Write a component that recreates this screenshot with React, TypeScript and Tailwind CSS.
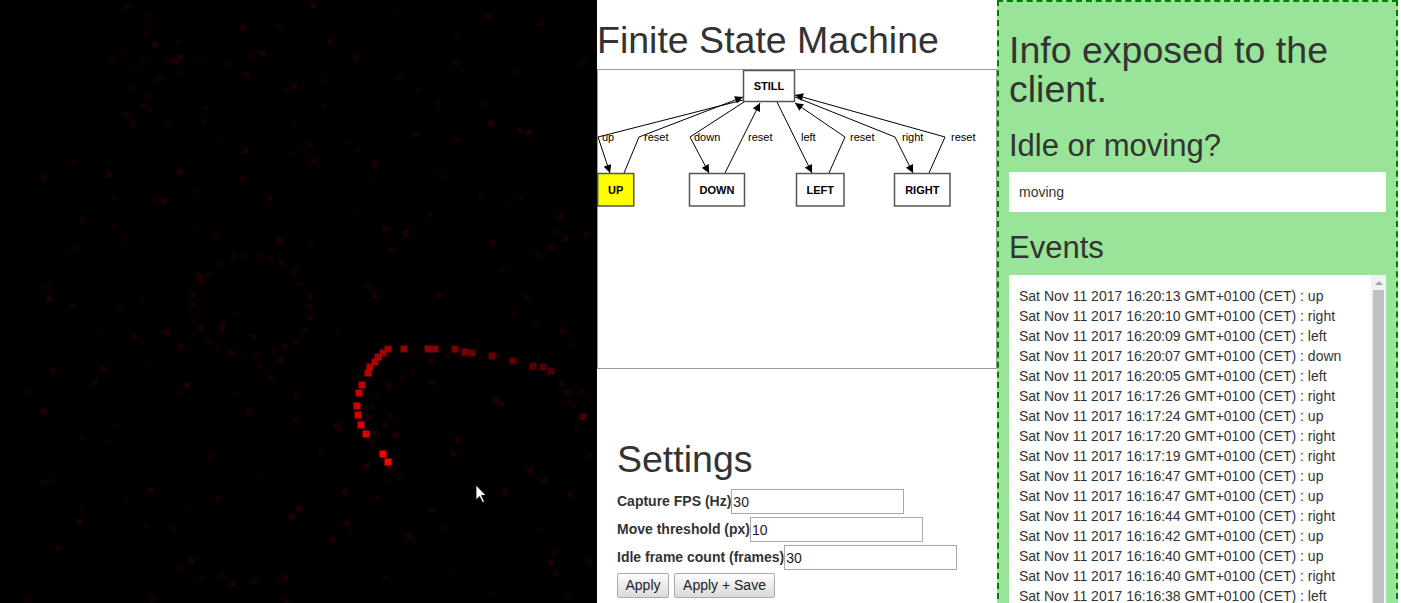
import React from "react";

const FONT = "Liberation Sans, Arial, Helvetica, sans-serif";

// bright trail, oldest first
const trail: [number, number][] = [
  [583, 417], [551, 371], [543, 367], [533, 366], [513, 361], [492, 356],
  [472, 353], [465, 352], [455, 349], [435, 349], [428, 349], [404, 349],
  [388, 349], [383, 353], [378, 357], [375, 362], [370, 367], [368, 373],
  [362, 385], [359, 393], [357, 406], [358, 415], [361, 425], [366, 434],
  [383, 454], [388, 462],
];

function faintDots() {
  const dots: { x: number; y: number; c: number }[] = [];
  let seed = 1337;
  const rnd = () => {
    seed = (seed * 1103515245 + 12345) % 2147483648;
    return seed / 2147483648;
  };
  for (let i = 0; i < 200; i++) {
    dots.push({ x: 20 + rnd() * 570, y: rnd() * 600, c: 10 + Math.floor(rnd() * 22) });
  }
  // traces from older frames
  for (let a = 0; a < 26; a++) {
    const t = (a / 26) * Math.PI * 2;
    dots.push({ x: 245 + Math.cos(t) * 58 + rnd() * 6, y: 300 + Math.sin(t) * 52 + rnd() * 6, c: 14 + Math.floor(rnd() * 10) });
  }
  for (let a = 0; a < 22; a++) {
    const t = Math.PI * 0.1 + (a / 22) * Math.PI * 1.2;
    dots.push({ x: 470 + Math.cos(t) * 105 + rnd() * 6, y: 420 - Math.sin(t) * 70 + rnd() * 6, c: 16 + Math.floor(rnd() * 10) });
  }
  for (let a = 0; a < 14; a++) {
    dots.push({ x: 120 + rnd() * 60, y: 4 + a * 9, c: 14 + Math.floor(rnd() * 8) });
  }
  return dots;
}

function Canvas() {
  const dots = faintDots();
  return (
    <div className="w-[597px] h-[603px] shrink-0 bg-black">
      <svg width="597" height="603" viewBox="0 0 597 603">
        {dots.map((d, i) => (
          <rect key={i} x={d.x} y={d.y} width="6" height="6" fill={`rgb(${d.c},0,0)`} />
        ))}
        {trail.map(([x, y], i) => {
          const r = i >= trail.length - 2 ? 255 : Math.round(70 + (i / (trail.length - 3)) * 158);
          return <rect key={i} x={x - 3.5} y={y - 3.5} width="7" height="7" fill={`rgb(${r},0,0)`} />;
        })}
        <path d="M476 485 L476 500 L479.5 496.5 L482.5 502.5 L484.5 501.5 L481.5 495.5 L486 495.5 Z" fill="#fff" stroke="#000" strokeWidth="0.8" />
      </svg>
    </div>
  );
}

function Node({ x, w, y, h, label, fill = "#fff" }: { x: number; w: number; y: number; h: number; label: string; fill?: string }) {
  return (
    <g>
      <rect x={x} y={y} width={w} height={h} fill={fill} stroke="#555" strokeWidth="1.5" />
      <text x={x + w / 2} y={y + h / 2 + 4} textAnchor="middle" fontSize="11" fontWeight="bold" fontFamily={FONT} fill="#000">
        {label}
      </text>
    </g>
  );
}

function FsmDiagram() {
  const edges = [
    "M146,31 L1,68 L13,104",
    "M27,104 L42,68 L146,28",
    "M147,33 L93,68 L112,104",
    "M128,104 L163,34",
    "M180,33 L215,104",
    "M232,104 L248,68 L198,34",
    "M198,28 L298,68 L316,104",
    "M332,104 L348,68 L198,26",
  ];
  const labels: [string, number][] = [
    ["up", 5], ["reset", 47], ["down", 97], ["reset", 151],
    ["left", 204], ["reset", 253], ["right", 305], ["reset", 354],
  ];
  return (
    <svg width="400" height="300" viewBox="0 0 400 300" className="block shrink-0">
      <defs>
        <marker id="arrow" viewBox="0 0 10 10" refX="10" refY="5" markerWidth="10" markerHeight="8" markerUnits="userSpaceOnUse" orient="auto">
          <path d="M0,0 L10,5 L0,10 z" fill="#000" />
        </marker>
      </defs>
      <rect x="0.5" y="0.5" width="399" height="299" fill="#fff" stroke="#999" />
      {edges.map((d) => (
        <path key={d} d={d} fill="none" stroke="#000" strokeWidth="1" markerEnd="url(#arrow)" />
      ))}
      {labels.map(([t, x], i) => (
        <text key={i} x={x} y={72} fontSize="11" fontFamily={FONT} fill="#000">
          {t}
        </text>
      ))}
      <Node x={146.5} y={1.5} w={51} h={31} label="STILL" />
      <Node x={0.75} y={104.5} w={36} h={32.5} label="UP" fill="#ffff00" />
      <Node x={92.5} y={104.5} w={55} h={32.5} label="DOWN" />
      <Node x={199.5} y={104.5} w={47.5} h={32.5} label="LEFT" />
      <Node x={297.5} y={104.5} w={55.5} h={32.5} label="RIGHT" />
    </svg>
  );
}

const settings = [
  { label: "Capture FPS (Hz)", value: "30" },
  { label: "Move threshold (px)", value: "10" },
  { label: "Idle frame count (frames)", value: "30" },
];

const events = [
  "16:20:13 GMT+0100 (CET) : up",
  "16:20:10 GMT+0100 (CET) : right",
  "16:20:09 GMT+0100 (CET) : left",
  "16:20:07 GMT+0100 (CET) : down",
  "16:20:05 GMT+0100 (CET) : left",
  "16:17:26 GMT+0100 (CET) : right",
  "16:17:24 GMT+0100 (CET) : up",
  "16:17:20 GMT+0100 (CET) : right",
  "16:17:19 GMT+0100 (CET) : right",
  "16:16:47 GMT+0100 (CET) : up",
  "16:16:47 GMT+0100 (CET) : up",
  "16:16:44 GMT+0100 (CET) : right",
  "16:16:42 GMT+0100 (CET) : up",
  "16:16:40 GMT+0100 (CET) : up",
  "16:16:40 GMT+0100 (CET) : right",
  "16:16:38 GMT+0100 (CET) : left",
  "16:16:35 GMT+0100 (CET) : down",
  "16:16:33 GMT+0100 (CET) : up",
];

function MiddleColumn() {
  return (
    <div className="w-[400px] shrink-0 flex flex-col">
      <h1 className="mt-[20px] mb-[9px] text-[37.5px] leading-[40px] font-normal">Finite State Machine</h1>
      <FsmDiagram />
      <div className="pl-[20px]">
        <h1 className="mt-[70px] mb-[10px] text-[37.5px] leading-[40px] font-normal">Settings</h1>
        {settings.map((s) => (
          <div key={s.label} className="flex items-center h-[25px] mb-[3px]">
            <label className="font-bold text-[14px] text-[#333]">{s.label}</label>
            <input
              defaultValue={s.value}
              className="w-[173px] h-[25px] border border-[#a9a9a9] px-[1px] text-[14px] text-[#222] bg-white outline-none"
            />
          </div>
        ))}
        <div className="flex gap-[5px]">
          <button className="w-[52px] h-[25px] border border-[#aaa] rounded-[2px] bg-gradient-to-b from-[#fdfdfd] to-[#dadada] text-[14px] text-[#222]">
            Apply
          </button>
          <button className="w-[101px] h-[25px] border border-[#aaa] rounded-[2px] bg-gradient-to-b from-[#fdfdfd] to-[#dadada] text-[14px] text-[#222]">
            Apply + Save
          </button>
        </div>
      </div>
    </div>
  );
}

function InfoPanel() {
  return (
    <div className="w-[401px] h-[800px] shrink-0 bg-[#98e498] border-2 border-dashed border-[#008000] px-[10px]">
      <h1 className="mt-[29px] text-[37.5px] leading-[39px] font-normal">Info exposed to the client.</h1>
      <h2 className="mt-[20px] mb-[10px] text-[31px] leading-[33px] font-normal">Idle or moving?</h2>
      <div className="h-[40px] bg-white px-[10px] pt-px flex items-center text-[14px]">moving</div>
      <h2 className="mt-[19px] mb-[11px] text-[31px] leading-[33px] font-normal">Events</h2>
      <div className="h-[420px] bg-white flex overflow-hidden">
        <ul className="flex-1 pt-[11px] pl-[10px] text-[14px] leading-[20px] whitespace-nowrap overflow-hidden">
          {events.map((e, i) => (
            <li key={i}>Sat Nov 11 2017 {e}</li>
          ))}
        </ul>
        <div className="w-[15px] bg-[#f1f1f1] flex flex-col items-center">
          <div className="h-[15px] flex items-center justify-center">
            <div className="w-0 h-0 border-l-[4px] border-r-[4px] border-b-[4px] border-l-transparent border-r-transparent border-b-[#a3a3a3]" />
          </div>
          <div className="w-[11px] flex-1 bg-[#c1c1c1]" />
        </div>
      </div>
    </div>
  );
}

export default function App() {
  return (
    <div className="flex w-[1401px] h-[603px] overflow-hidden bg-white text-[#333] font-['Liberation_Sans',Arial,sans-serif]">
      <Canvas />
      <MiddleColumn />
      <InfoPanel />
    </div>
  );
}
